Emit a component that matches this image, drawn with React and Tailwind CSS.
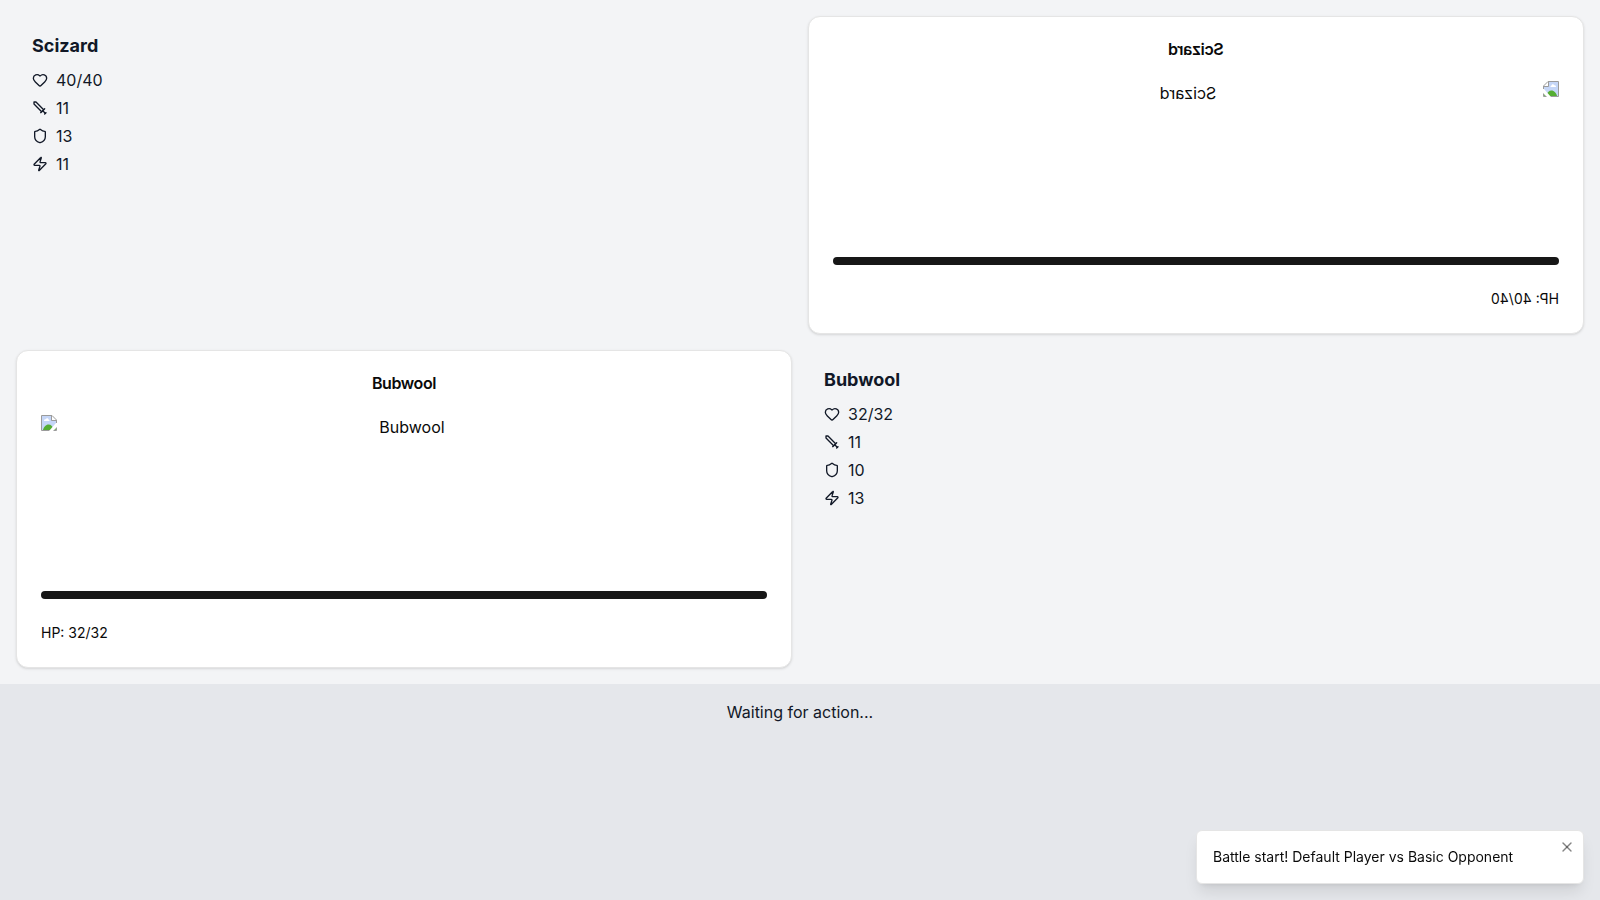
import React from "react";
import { Heart, Shield, Zap, X } from "lucide-react";

function SwordIcon() {
  return (
    <svg
      className="size-4"
      viewBox="0 0 24 24"
      fill="none"
      stroke="currentColor"
      strokeWidth="2"
      strokeLinecap="round"
      strokeLinejoin="round"
      aria-hidden="true"
    >
      <polyline points="14.5 17.5 3 6 3 3 6 3 17.5 14.5" />
      <line x1="13" x2="19" y1="19" y2="13" />
      <line x1="16" x2="20" y1="16" y2="20" />
      <line x1="19" x2="21" y1="21" y2="19" />
    </svg>
  );
}

function MissingImageIcon() {
  return (
    <svg className="size-4 shrink-0" viewBox="0 0 16 16" aria-hidden="true">
      <path d="M1 1H11V5H15V15H1Z" fill="#c5d6f7" />
      <path d="M3 6C3 4.500 4 4 4.700 4.300C5.300 2.800 7.300 3 7.500 4.500C8.400 4.500 8.600 5.500 8.400 6Z" fill="#fff" />
      <path d="M2 15C2.500 12 5 9.500 7.500 9.500C10 9.500 12 11.500 13 15Z" fill="#55ae33" />
      <path d="M12.500 15L15 12.500V15Z" fill="#7dbb68" />
      <path d="M11 1L15 5H11Z" fill="#fff" />
      <path d="M0.500 15.500V0.500H11L15.500 5V15.500Z" fill="none" stroke="#9b9b9b" />
      <path d="M10.500 0.500V5.500H15.500" fill="none" stroke="#9b9b9b" />
      <path d="M16 8V12L12 16H8L15 8Z" fill="#fff" />
    </svg>
  );
}

function Stats({ name, hp, attack, defense, speed }) {
  const rows = [
    { label: "Health", icon: <Heart className="size-4" />, value: hp },
    { label: "Attack", icon: <SwordIcon />, value: attack },
    { label: "Defense", icon: <Shield className="size-4" />, value: defense },
    { label: "Speed", icon: <Zap className="size-4" />, value: speed },
  ];
  return (
    <section className="p-4">
      <h2 className="mb-2 text-lg font-bold">{name}</h2>
      <ul className="flex flex-col gap-1">
        {rows.map((row) => (
          <li key={row.label} className="flex items-center gap-2">
            {row.icon}
            <span>{row.value}</span>
          </li>
        ))}
      </ul>
    </section>
  );
}

function CreatureCard({ name, hp, flipped }) {
  return (
    <article
      className={
        "rounded-xl border border-[#e5e5e5] bg-white text-[#0a0a0a] shadow-sm" +
        (flipped ? " -scale-x-100" : "")
      }
    >
      <header className="p-6 text-center">
        <h3 className="leading-none font-semibold tracking-tight">{name}</h3>
      </header>
      <div className="px-6 pb-6">
        <div className="mb-4 flex h-40">
          <MissingImageIcon />
          <p className="flex-1 text-center">{name}</p>
        </div>
        <div className="h-2 rounded-full bg-[#171717]" />
      </div>
      <footer className="px-6 pb-6 text-sm">HP: {hp}</footer>
    </article>
  );
}

export default function App() {
  return (
    <div className="flex min-h-screen flex-col bg-[#f3f4f6] font-[Inter,sans-serif] text-[#111827]">
      <main className="grid grid-cols-2 gap-4 p-4">
        <Stats name="Scizard" hp="40/40" attack={11} defense={13} speed={11} />
        <CreatureCard name="Scizard" hp="40/40" flipped />
        <CreatureCard name="Bubwool" hp="32/32" />
        <Stats name="Bubwool" hp="32/32" attack={11} defense={10} speed={13} />
      </main>
      <section className="flex-1 bg-[#e5e7eb] p-4 text-center">
        <p>Waiting for action...</p>
      </section>
      <div
        role="status"
        className="fixed right-4 bottom-4 w-[388px] rounded-md border border-[#e5e5e5] bg-white p-4 pr-6 text-sm text-[#0a0a0a] shadow-lg"
      >
        <p>Battle start! Default Player vs Basic Opponent</p>
        <button
          type="button"
          aria-label="Close"
          className="absolute top-1 right-1 rounded-md p-1 text-[#0a0a0a]/50"
        >
          <X className="size-4" />
        </button>
      </div>
    </div>
  );
}
